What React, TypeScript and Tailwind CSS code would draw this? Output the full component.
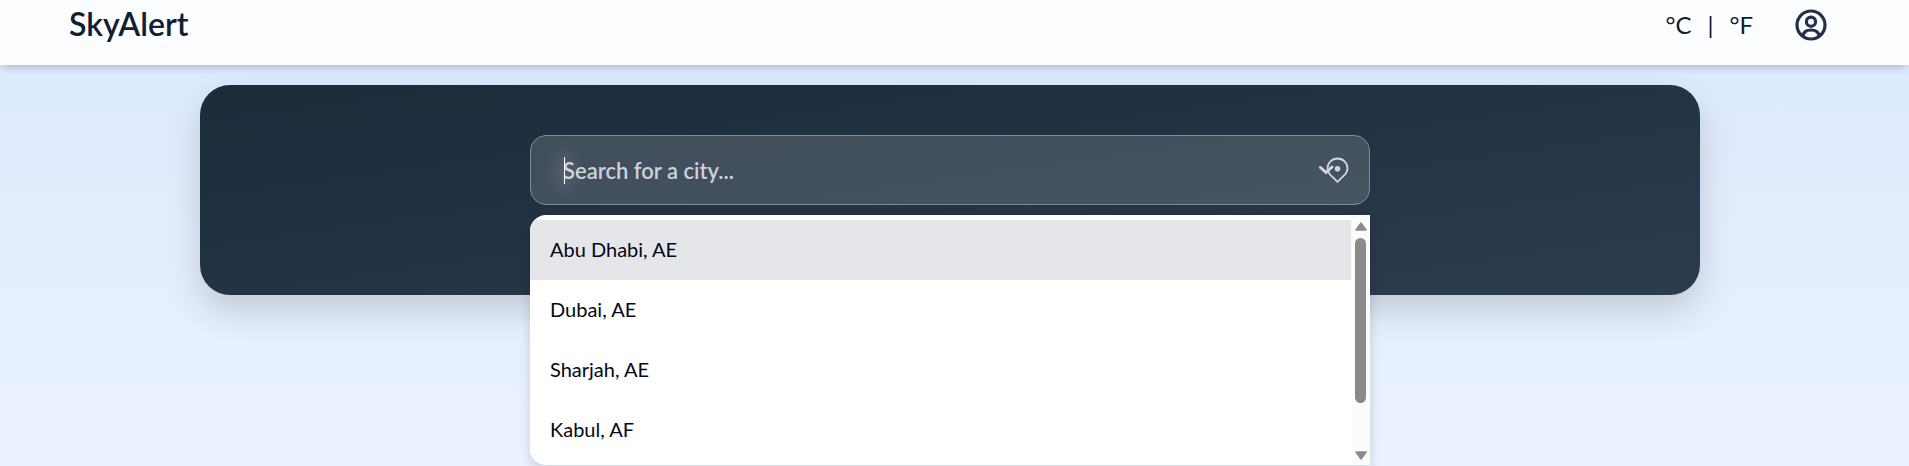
import { useState } from "react";

const cities = ["Abu Dhabi, AE", "Dubai, AE", "Sharjah, AE", "Kabul, AF"];

function AccountIcon() {
  return (
    <svg viewBox="0 0 32 32" className="size-8" fill="none" stroke="currentColor" strokeWidth="3.2" aria-hidden="true">
      <circle cx="16" cy="16" r="14" />
      <circle cx="16" cy="12.7" r="4.6" />
      <path d="M7.8 27c.7-4 4-6 8.200-6s7.500 2 8.200 6" />
    </svg>
  );
}

function PickerIcons() {
  return (
    <svg viewBox="0 0 30 26" className="h-[26px] w-[30px] shrink-0" fill="none" stroke="currentColor" aria-hidden="true">
      <path d="M1.500 10.500 7 15.500l6-5.500" strokeWidth="3" strokeLinecap="round" />
      <path d="M18.500 24.800 10.900 17.300C9.400 15.800 8.500 13.600 8.500 11.500a10 10 0 0 1 20 0c0 2.100-.9 4.300-2.400 5.800z" strokeWidth="1.800" strokeLinejoin="round" />
      <circle cx="18.500" cy="11.800" r="2.800" fill="currentColor" stroke="none" />
    </svg>
  );
}

function Header() {
  return (
    <header className="relative bg-[#fcfdfe] pb-4 shadow-[0_4px_8px_-2px_rgba(0,0,0,0.22)]">
      <div className="flex h-[49px] items-center justify-between pr-[82px] pl-[69px]">
        <a href="#" className="pb-0.5 text-[32px] leading-8 font-semibold text-[#102033]">SkyAlert</a>
        <div className="flex items-center gap-[42px] text-[#0f1b33]">
          <div className="flex items-center gap-4 text-[24px] leading-8">
            <button type="button">°C</button>
            <span>|</span>
            <button type="button">°F</button>
          </div>
          <button type="button" aria-label="Account" className="text-[#22304a]">
            <AccountIcon />
          </button>
        </div>
      </div>
    </header>
  );
}

function CityList({ onPick }: { onPick: (city: string) => void }) {
  return (
    <div className="absolute inset-x-0 top-full mt-[10px] flex h-[250px] overflow-hidden rounded-l-2xl bg-white shadow-[0_4px_12px_rgba(0,0,0,0.15)]">
      <ul className="flex-1 overflow-hidden pt-[5px]">
        {cities.map((city, i) => (
          <li key={city}>
            <button
              type="button"
              onClick={() => onPick(city)}
              className={`block h-[60px] w-full px-5 pb-0.5 text-left text-[20px] text-[#020817] ${i === 0 ? "bg-[#e5e6ea]" : "bg-white"}`}
            >
              {city}
            </button>
          </li>
        ))}
      </ul>
      <div className="flex w-[19px] flex-col items-center bg-[#fcfcfc] pt-[7px] pb-[5px] text-[#8b8b8b]" aria-hidden="true">
        <svg viewBox="0 0 12 9" className="h-[9px] w-3">
          <path d="M6 1 11 8H1z" fill="currentColor" stroke="currentColor" strokeWidth="1.500" strokeLinejoin="round" />
        </svg>
        <div className="mt-[7px] h-[165px] w-[11px] rounded-full bg-[#8b8b8b]" />
        <svg viewBox="0 0 12 9" className="mt-auto h-[9px] w-3">
          <path d="M6 8 11 1H1z" fill="currentColor" stroke="currentColor" strokeWidth="1.500" strokeLinejoin="round" />
        </svg>
      </div>
    </div>
  );
}

export default function App() {
  const [query, setQuery] = useState("");
  return (
    <div className="min-h-screen bg-linear-to-b from-[#dbe9fd] to-[#ebf2ff] font-['Lato',sans-serif]">
      <Header />
      <main className="pt-5 pr-[9px]">
        <section className="mx-auto h-[210px] max-w-[1500px] rounded-[30px] bg-linear-to-br from-[#1c2b3a] to-[#2c3c4f] pt-[50px] shadow-[0_15px_35px_rgba(0,0,0,0.16)]">
          <div className="relative mx-auto w-14/25">
            <label className="relative flex h-[70px] items-center rounded-2xl border border-[#7d8c98] bg-white/15 pr-5 pl-8 text-[#d3d7dc]">
              {query === "" && (
                <span
                  aria-hidden="true"
                  className="absolute left-[33px] h-[27px] w-px bg-white shadow-[0_0_18px_4px_rgba(255,255,255,0.22)]"
                />
              )}
              <input
                aria-label="City"
                value={query}
                onChange={(e) => setQuery(e.target.value)}
                placeholder="Search for a city..."
                className="min-w-0 flex-1 bg-transparent text-[22px] font-semibold text-white caret-white outline-none placeholder:text-[#cdd2d8]"
              />
              <PickerIcons />
            </label>
            <CityList onPick={setQuery} />
          </div>
        </section>
      </main>
    </div>
  );
}
